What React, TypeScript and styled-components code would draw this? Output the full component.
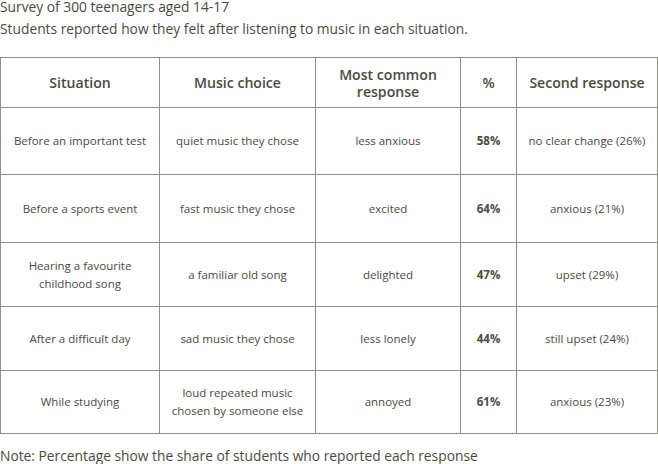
import React from "react";
import styled, { createGlobalStyle } from "styled-components";

const Global = createGlobalStyle`
  html, body { margin: 0; padding: 0; background: #ffffff; }
  body { font-family: "Open Sans", "DejaVu Sans", sans-serif; color: #4a4a42; }
`;

const Page = styled.div`
  width: 658px;
  height: 464px;
  overflow: hidden;
`;

const Intro = styled.div`
  padding-top: 0;
  margin-top: -4px;
  font-size: 13.8px;
  line-height: 22px;
`;

const Line = styled.p`
  margin: 0;
  white-space: nowrap;
`;

const Table = styled.table`
  margin-top: 17px;
  width: 657px;
  table-layout: fixed;
  border-collapse: collapse;
  border: 1px solid #8e8e84;
`;

const Row = styled.tr<{ $h: number }>`
  height: ${(p) => p.$h}px;
`;

const Head = styled.th`
  border: 1px solid #8e8e84;
  font-size: 14.1px;
  font-weight: 600;
  line-height: 17px;
  text-align: center;
  vertical-align: middle;
  padding: 0 8px;
  color: #4a4a42;
`;

const Cell = styled.td<{ $bold?: boolean }>`
  border: 1px solid #8e8e84;
  font-size: 11.5px;
  font-weight: ${(p) => (p.$bold ? 700 : 400)};
  line-height: 18px;
  text-align: center;
  vertical-align: middle;
  padding: 0 8px;
  color: #4a4a42;
`;

const Note = styled.p`
  margin: 11px 0 0;
  font-size: 13.8px;
  line-height: 22px;
  white-space: nowrap;
`;

const rows = [
  { h: 67, s: "Before an important test", m: "quiet music they chose", r: "less anxious", p: "58%", x: "no clear change (26%)" },
  { h: 68, s: "Before a sports event", m: "fast music they chose", r: "excited", p: "64%", x: "anxious (21%)" },
  { h: 64, s: "Hearing a favourite childhood song", m: "a familiar old song", r: "delighted", p: "47%", x: "upset (29%)" },
  { h: 64, s: "After a difficult day", m: "sad music they chose", r: "less lonely", p: "44%", x: "still upset (24%)" },
  { h: 63, s: "While studying", m: "loud repeated music chosen by someone else", r: "annoyed", p: "61%", x: "anxious (23%)" },
];

export default function App() {
  return (
    <Page>
      <Global />
      <Intro>
        <Line>Survey of 300 teenagers aged 14-17</Line>
        <Line>Students reported how they felt after listening to music in each situation.</Line>
      </Intro>
      <Table>
        <colgroup>
          <col style={{ width: 159 }} />
          <col style={{ width: 156 }} />
          <col style={{ width: 145 }} />
          <col style={{ width: 56 }} />
          <col style={{ width: 141 }} />
        </colgroup>
        <thead>
          <Row $h={50}>
            <Head>Situation</Head>
            <Head>Music choice</Head>
            <Head>Most common response</Head>
            <Head>%</Head>
            <Head>Second response</Head>
          </Row>
        </thead>
        <tbody>
          {rows.map((r) => (
            <Row key={r.s} $h={r.h}>
              <Cell>{r.s}</Cell>
              <Cell>{r.m}</Cell>
              <Cell>{r.r}</Cell>
              <Cell $bold>{r.p}</Cell>
              <Cell>{r.x}</Cell>
            </Row>
          ))}
        </tbody>
      </Table>
      <Note>Note: Percentage show the share of students who reported each response</Note>
    </Page>
  );
}
